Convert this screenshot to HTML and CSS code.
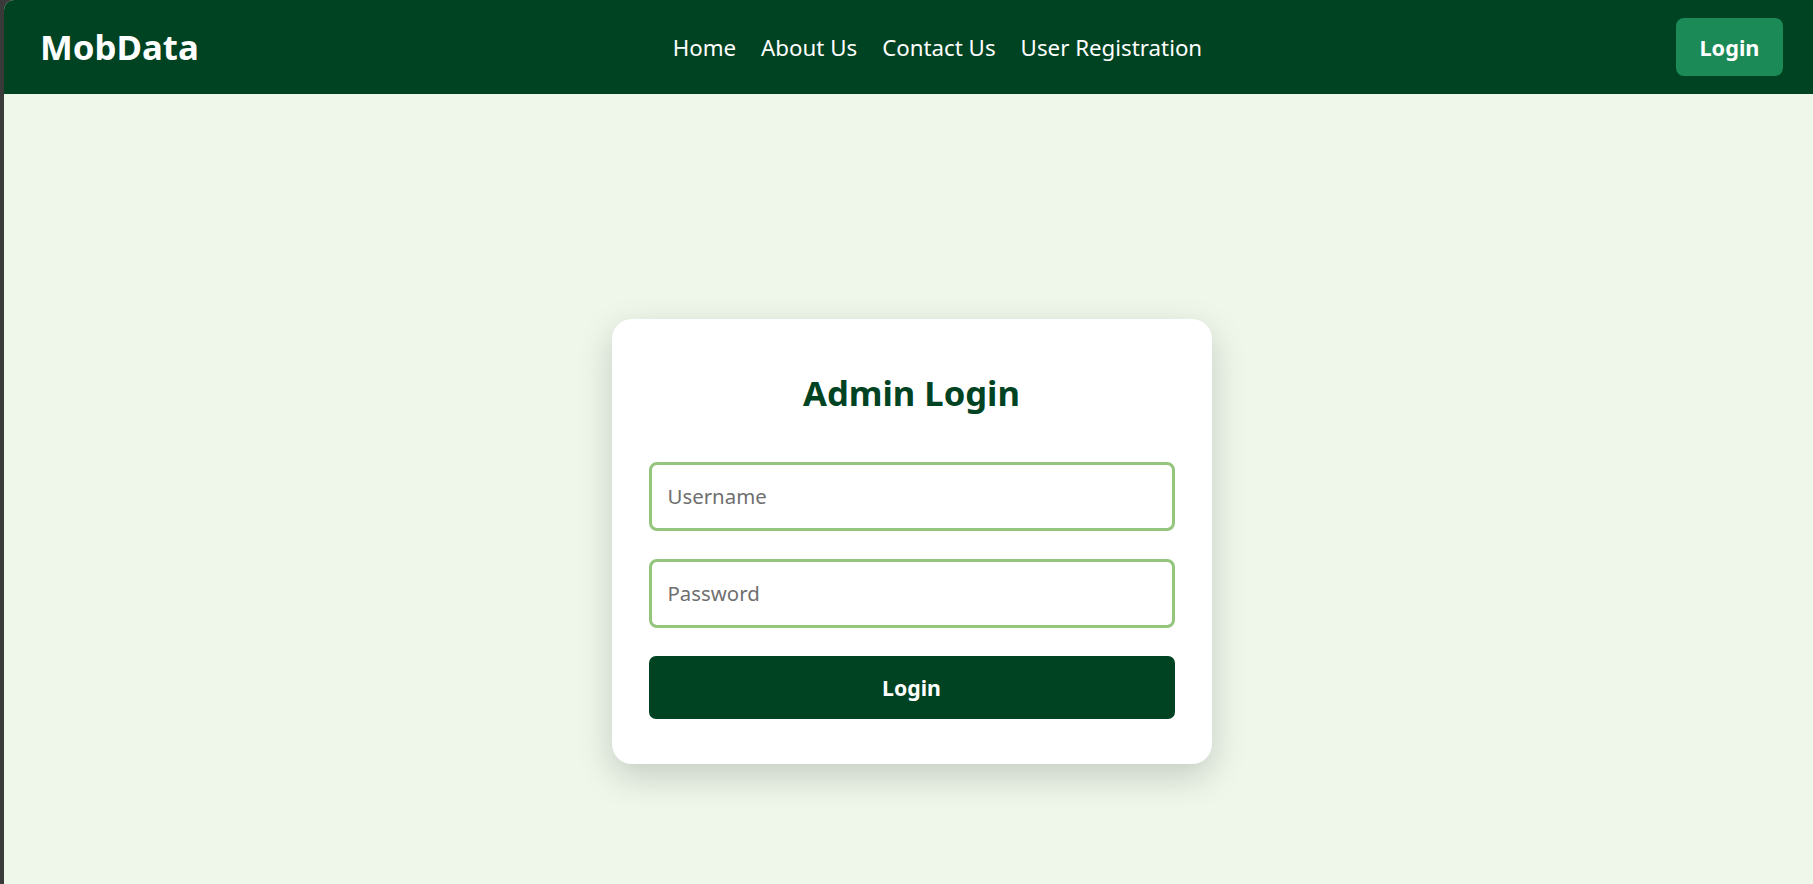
FILE: index.html
```html
<!DOCTYPE html>
<html lang="en">
<head>
<meta charset="utf-8">
<title>MobData - Admin Login</title>
<link rel="stylesheet" href="styles.css">
</head>
<body>
<div class="app">
  <header class="navbar">
    <div class="brand">MobData</div>
    <nav class="nav-links">
      <a href="#">Home</a>
      <a href="#">About Us</a>
      <a href="#">Contact Us</a>
      <a href="#">User Registration</a>
    </nav>
    <button class="nav-login">Login</button>
  </header>
  <main class="main">
    <div class="card">
      <h2 class="card-title">Admin Login</h2>
      <input class="field" type="text" placeholder="Username">
      <input class="field" type="password" placeholder="Password">
      <button class="submit">Login</button>
    </div>
  </main>
</div>
</body>
</html>
```
FILE: styles.css
```css
html, body {
  margin: 0;
  padding: 0;
  height: 100%;
}
body {
  background: #3a3a3a;
  font-family: "Noto Sans", "Open Sans", sans-serif;
  overflow: hidden;
}
.app {
  margin-left: 4px;
  min-height: 100vh;
  background: #eff7eb;
  border-top-left-radius: 10px;
  overflow: hidden;
}
.navbar {
  height: 94px;
  background: #004322;
  display: flex;
  align-items: center;
  justify-content: space-between;
  padding: 0 30px 0 36px;
}
.brand {
  color: #ffffff;
  font-weight: 700;
  font-size: 34.8px;
  line-height: 1;
}
.nav-links {
  display: flex;
  gap: 25px;
}
.nav-links a {
  color: #ffffff;
  text-decoration: none;
  font-size: 22.3px;
}
.nav-login {
  width: 107px;
  height: 58px;
  border: none;
  border-radius: 8px;
  background: #1b8a56;
  color: #ffffff;
  font-family: inherit;
  font-weight: 700;
  font-size: 21.7px;
  padding: 0;
}
.main {
  display: flex;
  justify-content: center;
  padding-top: 225px;
  padding-left: 6px;
}
.card {
  width: 600px;
  box-sizing: border-box;
  background: #ffffff;
  border-radius: 20px;
  padding: 53px 37px 45px;
  box-shadow: 0 12px 35px rgba(0, 0, 0, 0.18);
  display: flex;
  flex-direction: column;
}
.card-title {
  margin: 0 0 48px;
  text-align: center;
  color: #004322;
  font-size: 34.6px;
  line-height: 1.2;
  font-weight: 700;
}
.field {
  height: 69px;
  box-sizing: border-box;
  border: 3px solid #93c57d;
  border-radius: 8px;
  padding: 0 16px;
  font-family: inherit;
  font-size: 20.4px;
  color: #333;
  margin: 0 0 28px;
  outline: none;
}
.field::placeholder {
  color: #6f6f6f;
}
.submit {
  height: 63px;
  border: none;
  border-radius: 7px;
  background: #004322;
  color: #ffffff;
  font-family: inherit;
  font-weight: 700;
  font-size: 21.3px;
}
```
